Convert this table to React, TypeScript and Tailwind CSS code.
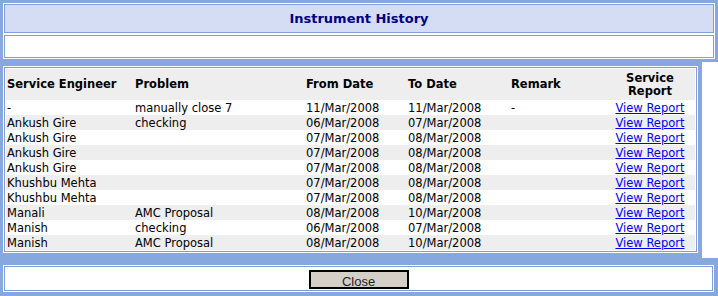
import React from "react";

type Row = {
  engineer: string;
  problem: string;
  from: string;
  to: string;
  remark: string;
};

const rows: Row[] = [
  { engineer: "-", problem: "manually close 7", from: "11/Mar/2008", to: "11/Mar/2008", remark: "-" },
  { engineer: "Ankush Gire", problem: "checking", from: "06/Mar/2008", to: "07/Mar/2008", remark: "" },
  { engineer: "Ankush Gire", problem: "", from: "07/Mar/2008", to: "08/Mar/2008", remark: "" },
  { engineer: "Ankush Gire", problem: "", from: "07/Mar/2008", to: "08/Mar/2008", remark: "" },
  { engineer: "Ankush Gire", problem: "", from: "07/Mar/2008", to: "08/Mar/2008", remark: "" },
  { engineer: "Khushbu Mehta", problem: "", from: "07/Mar/2008", to: "08/Mar/2008", remark: "" },
  { engineer: "Khushbu Mehta", problem: "", from: "07/Mar/2008", to: "08/Mar/2008", remark: "" },
  { engineer: "Manali", problem: "AMC Proposal", from: "08/Mar/2008", to: "10/Mar/2008", remark: "" },
  { engineer: "Manish", problem: "checking", from: "06/Mar/2008", to: "07/Mar/2008", remark: "" },
  { engineer: "Manish", problem: "AMC Proposal", from: "08/Mar/2008", to: "10/Mar/2008", remark: "" },
];

export default function App() {
  return (
    <div className="w-[718px] h-[296px] overflow-hidden bg-white font-['DejaVu_Sans',Verdana,sans-serif] text-black">
      {/* Title panel */}
      <div className="bg-[#87a7df] p-[3px]">
        <div className="flex flex-col gap-[2px] bg-white p-px">
          <div className="flex h-[29px] items-center justify-center border border-[#7f9fdb] bg-[#d5ddf5] text-[13px] font-bold text-[#000080]">
            Instrument History
          </div>
          <div className="h-[23px] border border-[#7f9fdb] bg-white" />
        </div>
      </div>

      {/* History table panel */}
      <div className="w-[702px] bg-[#87a7df] pt-[4px] pl-[3px] pr-[4px] pb-[5px]">
        <div className="bg-white p-px">
          <div className="border border-[#7f9fdb] bg-white p-px">
            <table className="w-[689px] table-fixed border-collapse text-[11.5px]">
              <colgroup>
                <col className="w-[128px]" />
                <col className="w-[171px]" />
                <col className="w-[102px]" />
                <col className="w-[103px]" />
                <col className="w-[95px]" />
                <col className="w-[90px]" />
              </colgroup>
              <thead>
                <tr className="h-[31px] bg-[#eeeeee] font-bold">
                  <th className="p-0 pl-px text-left align-middle">Service Engineer</th>
                  <th className="p-0 pl-px text-left align-middle">Problem</th>
                  <th className="p-0 pl-px text-left align-middle">From Date</th>
                  <th className="p-0 pl-px text-left align-middle">To Date</th>
                  <th className="p-0 pl-px text-left align-middle">Remark</th>
                  <th className="p-0 text-center align-middle leading-[13px]">
                    Service
                    <br />
                    Report
                  </th>
                </tr>
              </thead>
              <tbody>
                {rows.map((r, i) => (
                  <tr
                    key={i}
                    className={i % 2 === 0 ? "h-[15px] bg-white" : "h-[15px] bg-[#eeeeee]"}
                  >
                    <td className="p-0 pl-px pt-px leading-[14px] whitespace-nowrap">{r.engineer}</td>
                    <td className="p-0 pl-px pt-px leading-[14px] whitespace-nowrap">{r.problem}</td>
                    <td className="p-0 pl-px pt-px leading-[14px] whitespace-nowrap">{r.from}</td>
                    <td className="p-0 pl-px pt-px leading-[14px] whitespace-nowrap">{r.to}</td>
                    <td className="p-0 pl-px pt-px leading-[14px] whitespace-nowrap">{r.remark}</td>
                    <td className="p-0 pt-px text-center leading-[14px] whitespace-nowrap">
                      <a href="#" className="text-[#0000ee] underline">
                        View Report
                      </a>
                    </td>
                  </tr>
                ))}
              </tbody>
            </table>
          </div>
        </div>
      </div>

      {/* Action panel */}
      <div className="h-[38px] bg-[#87a7df] pt-[7px] pl-[3px] pr-[4px]">
        <div className="bg-white p-px">
          <div className="flex h-[25px] justify-center border border-[#7f9fdb] bg-white pt-[3px]">
            <button
              type="button"
              className="h-[19px] w-[100px] border-2 border-black bg-[#d4d0c8] pt-[2px] font-['Liberation_Sans',Arial,sans-serif] text-[13px] leading-[15px] text-[#222]"
            >
              Close
            </button>
          </div>
        </div>
      </div>
    </div>
  );
}
